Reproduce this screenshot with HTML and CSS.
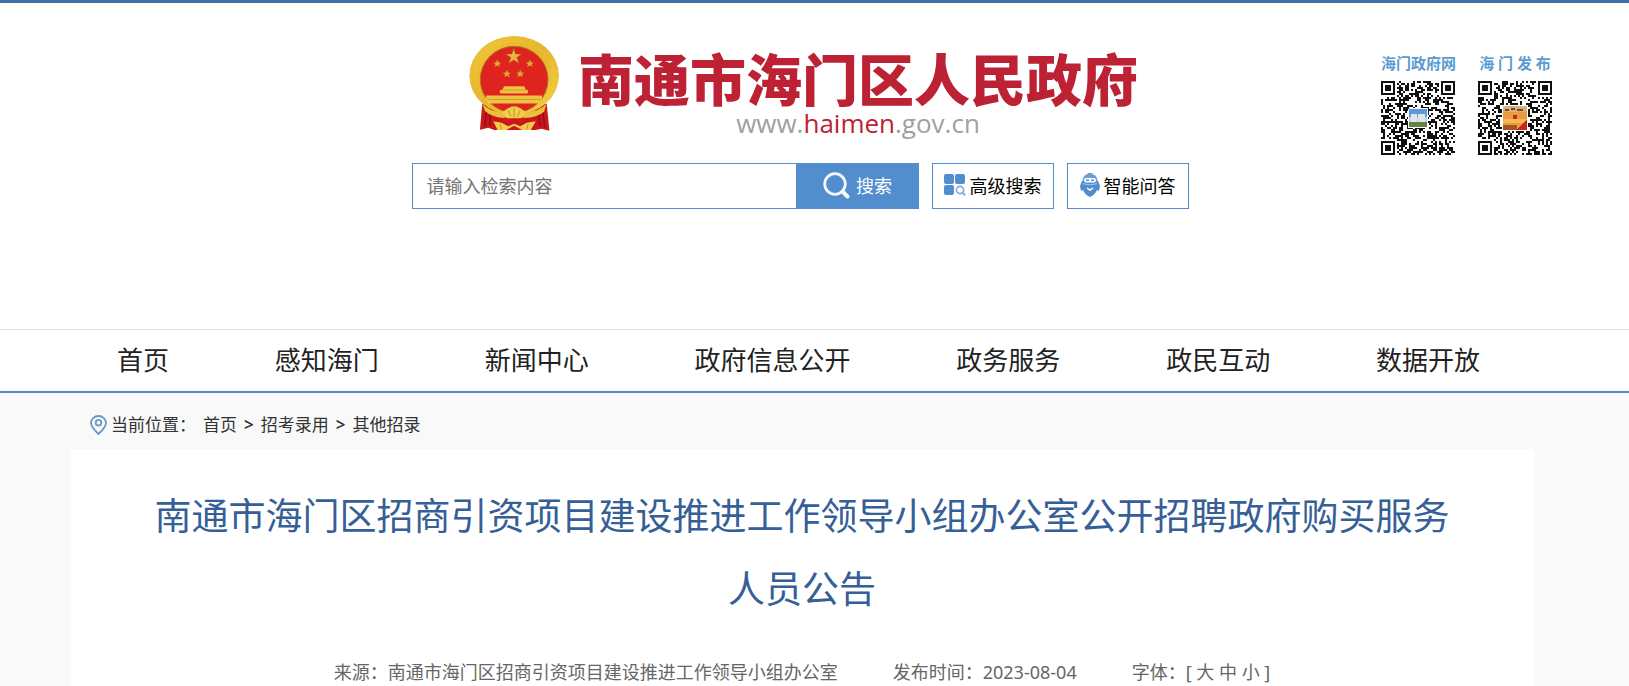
FILE: index.html
```html
<!DOCTYPE html>
<html lang="zh-CN">
<head>
<meta charset="utf-8">
<title>南通市海门区人民政府</title>
<link rel="stylesheet" href="styles.css">
</head>
<body>
<header class="header">
  <div class="center">
    <a class="logo" href="#">
      <svg class="emblem" viewBox="28 44 274 290" aria-hidden="true">
        <defs>
          <linearGradient id="gold" x1="0" y1="0" x2="1" y2="1">
            <stop offset="0" stop-color="#f0c63c"/><stop offset=".5" stop-color="#e6b52c"/><stop offset="1" stop-color="#f6d048"/>
          </linearGradient>
        </defs>
        <path d="M68 250 61 328 86 322 104 329H228L246 325 270 331 262 250Z" fill="#c9161b"/>
        <path d="M80 268 76 318M92 280 90 316M250 268 256 322M238 280 242 318" stroke="#8f0d12" stroke-width="4" fill="none"/>
        <ellipse cx="164" cy="165" rx="135" ry="119" fill="url(#gold)"/>
        <ellipse cx="164" cy="165" rx="119" ry="103" fill="none" stroke="#edca50" stroke-width="3" stroke-dasharray="5 7"/>
        <ellipse cx="164" cy="177" rx="102" ry="100" fill="#e0231f" stroke="#a9781c" stroke-width="3"/>
        <path d="M163 82 168 100 187 100 172 111 179 129 163 118 147 129 154 111 138 100 157 100Z" fill="#e9b83a" stroke="#96591a" stroke-width="1.5"/>
        <g fill="#e5a735" stroke="#a8441a">
          <path d="m114 116 3 9 9 0-7 6 3 9-9-5-8 5 2-9-7-6 9 0z"/>
          <path d="m212 116 3 9 9 0-7 6 3 9-9-5-8 5 2-9-7-6 9 0z"/>
          <path d="m143 147 3 9 9 0-7 6 3 9-9-5-8 5 2-9-7-6 9 0z"/>
          <path d="m183 147 3 9 9 0-7 6 3 9-9-5-8 5 2-9-7-6 9 0z"/>
        </g>
        <path d="M134 197H194L199 208 207 210 204 219H122L120 210 128 208ZM80 225H248V240L242 249H86L79 238Z" fill="#efc343"/>
        <path d="M130 209H199M82 237H246" stroke="#c58d20" stroke-width="2"/>
        <path d="M68 250Q90 274 128 276L144 266 156 258H172L184 266 200 276Q238 274 262 250L254 274Q232 292 196 293L164 284 132 293Q96 290 76 272Z" fill="#ecc03c"/>
        <path d="M128 276 144 264 164 258 184 264 200 276 186 294H142ZM101 303 126 307 146 318 164 310 182 318 202 307 229 303 214 329H188L164 316 140 329H114Z" fill="#f2cc4a"/>
        <path d="M146 270 154 288M164 262V290M182 270 174 288M122 310 126 328M206 310 202 328" stroke="#bd8620" stroke-width="2.5" fill="none"/>
        <path d="M130 292Q164 304 198 292L192 306 164 298 136 306Z" fill="#d21c1c"/>
      </svg>
      <span class="logo-words">
        <span class="logo-name">南通市海门区人民政府</span>
        <span class="logo-url">www.<b>haimen</b>.gov.cn</span>
      </span>
    </a>
    <form class="search">
      <input class="search-input" type="text" aria-label="请输入检索内容" placeholder="请输入检索内容">
      <button class="search-button" type="button">
        <svg width="27" height="27" viewBox="0 0 27 27" fill="none" stroke="#f3f8fd" aria-hidden="true"><circle cx="12" cy="12" r="10.3" stroke-width="2.8"/><path d="m19.5 19.5 5 5" stroke-width="4" stroke-linecap="round"/></svg>
        搜索
      </button>
      <button class="tool-button" type="button">
        <svg width="22" height="22" viewBox="0 0 22 22" fill="#528dce" aria-hidden="true"><rect width="10" height="10" rx="2"/><rect x="11" width="10" height="10" rx="2"/><rect y="11" width="10" height="10" rx="2"/><circle cx="16" cy="16" r="3.6" fill="none" stroke="#7eabd9" stroke-width="1.6"/><path d="m18.8 18.8 2.4 2.4" stroke="#7eabd9" stroke-width="2"/></svg>
        高级搜索
      </button>
      <button class="tool-button" type="button">
        <svg width="20" height="24" viewBox="0 0 20 24" aria-hidden="true"><path d="M2.500 8Q3 2 7 1.500L8 0H12L13 1.500Q17 2 17.500 8Z" fill="#6c9fd5"/><path d="M2 8H18L20 13 19 18 17 17Q15 22 10 24 5 22 3 17L1 18 0 13Z" fill="#528dce"/><rect x="4" y="5" width="12" height="4.500" rx="2.200" fill="#fff"/><path d="M6 7.200h3M11 7.200h3" stroke="#528dce" stroke-width="1.500"/><path d="M3 10.700Q10 13 17 10.700" fill="none" stroke="#a9c8e8"/><path d="m7 15 3 2 3-2" fill="none" stroke="#fff" stroke-width="1.500"/></svg>
        智能问答
      </button>
    </form>
  </div>
  <div class="codes">
    <figure class="code">
      <figcaption>海门政府网</figcaption>
      <svg class="qr" data-seed="7" viewBox="0 0 37 37" shape-rendering="crispEdges" role="img" aria-label="海门政府网二维码">
        <path class="modules"/>
        <rect x="13.500" y="13.500" width="10" height="10" rx="1" fill="#fff"/>
        <rect x="14" y="14" width="9" height="9" fill="#5c9ade"/>
        <path d="M14 18h9v3h-9z" fill="#b9d2e8"/>
        <path d="M15 16.500h3v4h-3zM18.500 16.500h3.500v4h-3.500z" fill="#dfe6e6"/>
        <path d="M14 20.500h9V23h-9z" fill="#648242"/>
      </svg>
    </figure>
    <figure class="code">
      <figcaption>海 门 发 布</figcaption>
      <svg class="qr" data-seed="29" viewBox="0 0 37 37" shape-rendering="crispEdges" role="img" aria-label="海门发布二维码">
        <path class="modules"/>
        <rect x="12" y="12" width="13" height="13" rx="1" fill="#fff"/>
        <rect x="12.500" y="12.500" width="12" height="12" fill="#e99a45"/>
        <path d="M12.500 12.500h12v3h-12z" fill="#d9b07a"/>
        <path d="M12.500 19h12v2h-12z" fill="#f4b94f"/>
        <path d="M13.500 14.500h2M16.500 14h2M19.500 14.500h3" stroke="#7c4a24" stroke-width=".7"/>
        <path d="M17.500 17h2v2h-2zM21 22.500l3.500-3v5h-5z" fill="#c9251e"/>
        <path d="M12.500 22h7v2.500h-7z" fill="#a4551f"/>
      </svg>
    </figure>
  </div>
</header>
<nav class="nav">
  <a href="#">首页</a>
  <a href="#">感知海门</a>
  <a href="#">新闻中心</a>
  <a href="#">政府信息公开</a>
  <a href="#">政务服务</a>
  <a href="#">政民互动</a>
  <a href="#">数据开放</a>
</nav>
<main class="main">
  <div class="crumbs">
    <svg width="17" height="20" viewBox="0 0 17 20" fill="none" stroke="#6a97c8" stroke-width="1.800" aria-hidden="true"><path d="M8.500 19Q1 12 1 8a7.500 7 0 0 1 15 0Q16 12 8.500 19Z"/><circle cx="8.500" cy="7.700" r="2.800"/></svg>
    <span>当前位置：</span>
    <a href="#">首页</a><b>&gt;</b><a href="#">招考录用</a><b>&gt;</b><a href="#">其他招录</a>
  </div>
  <article class="card">
    <h1 class="title">南通市海门区招商引资项目建设推进工作领导小组办公室公开招聘政府购买服务人员公告</h1>
    <div class="meta">
      <span>来源：南通市海门区招商引资项目建设推进工作领导小组办公室</span>
      <span>发布时间：2023-08-04</span>
      <span>字体：[ <a href="#">大</a> <a href="#">中</a> <a href="#">小</a> ]</span>
    </div>
  </article>
</main>
<script src="qr.js"></script>
</body>
</html>
```
FILE: styles.css
```css
* { box-sizing: border-box; }

body {
  margin: 0;
  min-height: 100vh;
  display: flex;
  flex-direction: column;
  background: #fff;
  color: #333;
  font-family: "Noto Sans", "Noto Sans CJK SC", sans-serif;
}

a { color: inherit; text-decoration: none; }

button, input { font: inherit; }

.header {
  display: grid;
  grid-template-columns: 1fr auto 1fr;
  align-items: start;
  padding: 32px 77px 120px 48px;
  border-top: 3px solid #3f6fa8;
}

.center { grid-column: 2; }

.logo {
  display: flex;
  gap: 18px;
  width: max-content;
  margin: 0 auto;
  padding-left: 7px;
  height: 128px;
}

.emblem { width: 91px; height: 97px; }

.logo-words {
  display: flex;
  flex-direction: column;
  align-items: center;
  padding-top: 12px;
}

.logo-name {
  color: #bc2234;
  font-family: "Noto Sans CJK SC", sans-serif;
  font-size: 56px;
  font-weight: 900;
  line-height: 60px;
}

.logo-url {
  margin-top: 2px;
  color: #a0a0a0;
  font-family: "Open Sans", sans-serif;
  font-size: 26px;
  line-height: 28px;
}

.logo-url b { color: #bc2234; font-weight: 500; }

.search { display: flex; gap: 13px; font-size: 18px; }

.search-input {
  width: 385px;
  height: 46px;
  margin-right: -13px;
  padding: 0 14px;
  border: 1px solid #528dce;
  border-radius: 0;
  outline: 0;
}

.search-input::placeholder { color: #757575; opacity: 1; }

.search-button, .tool-button {
  display: flex;
  align-items: center;
  justify-content: center;
  width: 122px;
  height: 46px;
  padding: 0 0 2px;
  border: 1px solid #528dce;
}

.search-button { gap: 6px; background: #528dce; color: #fff; }

.tool-button { gap: 4px; background: #fff; color: #000; }

.codes {
  grid-column: 3;
  justify-self: end;
  display: flex;
  gap: 23px;
  padding-top: 16px;
}

.code { margin: 0; width: 74px; }

.code figcaption {
  color: #5c9bd1;
  font-size: 15px;
  font-weight: 700;
  line-height: 24px;
  margin-bottom: 6px;
  text-align: center;
  white-space: nowrap;
}

.qr { display: block; width: 74px; height: 74px; }

.modules { fill: #111; }

.nav {
  display: flex;
  justify-content: space-between;
  padding: 0 149px 0 117px;
  border-top: 1px solid #dfe5ec;
  border-bottom: 2px solid #4c8dca;
  color: #222;
  font-size: 26px;
  line-height: 61px;
}

.main {
  flex: 1;
  display: flex;
  flex-direction: column;
  padding: 0 95px 0 70px;
  background: #f9f9f9;
}

.crumbs {
  display: flex;
  align-items: center;
  gap: 7px;
  padding: 20px 20px 12px;
  font-size: 17px;
  line-height: 24px;
}

.crumbs svg { margin-right: -3px; }

.crumbs b { font-weight: 600; }

.card {
  flex: 1;
  padding: 30px 80px 0;
  background: #fff;
  text-align: center;
}

.title {
  margin: 0;
  color: #355f96;
  font-size: 37px;
  font-weight: 400;
  line-height: 73px;
}

.meta {
  display: flex;
  justify-content: center;
  gap: 55px;
  padding-top: 35px;
  color: #666;
  font-size: 18px;
  line-height: 24px;
}
```
FILE: qr.js
```js
// Draws a 37 x 37 module pattern with three finder squares into each .qr element.
const SIZE = 37;

function finder(x, y) {
  const inBox = x >= 0 && x < 7 && y >= 0 && y < 7;
  if (!inBox) return false;
  const ring = Math.max(Math.abs(x - 3), Math.abs(y - 3));
  return ring !== 2;
}

document.querySelectorAll(".qr").forEach((svg) => {
  let state = Number(svg.dataset.seed);
  const next = () => {
    state = (state * 1103515245 + 12345) % 2147483648;
    return state / 2147483648;
  };
  let d = "";
  for (let y = 0; y < SIZE; y++) {
    for (let x = 0; x < SIZE; x++) {
      const right = SIZE - 7;
      const nearFinder = (x < 8 && y < 8) || (x >= right - 1 && y < 8) || (x < 8 && y >= right - 1);
      const dark = nearFinder
        ? finder(x, y) || finder(x - right, y) || finder(x, y - right)
        : next() < 0.5;
      if (dark) d += `M${x} ${y}h1v1h-1z`;
    }
  }
  svg.querySelector(".modules").setAttribute("d", d);
});
```
